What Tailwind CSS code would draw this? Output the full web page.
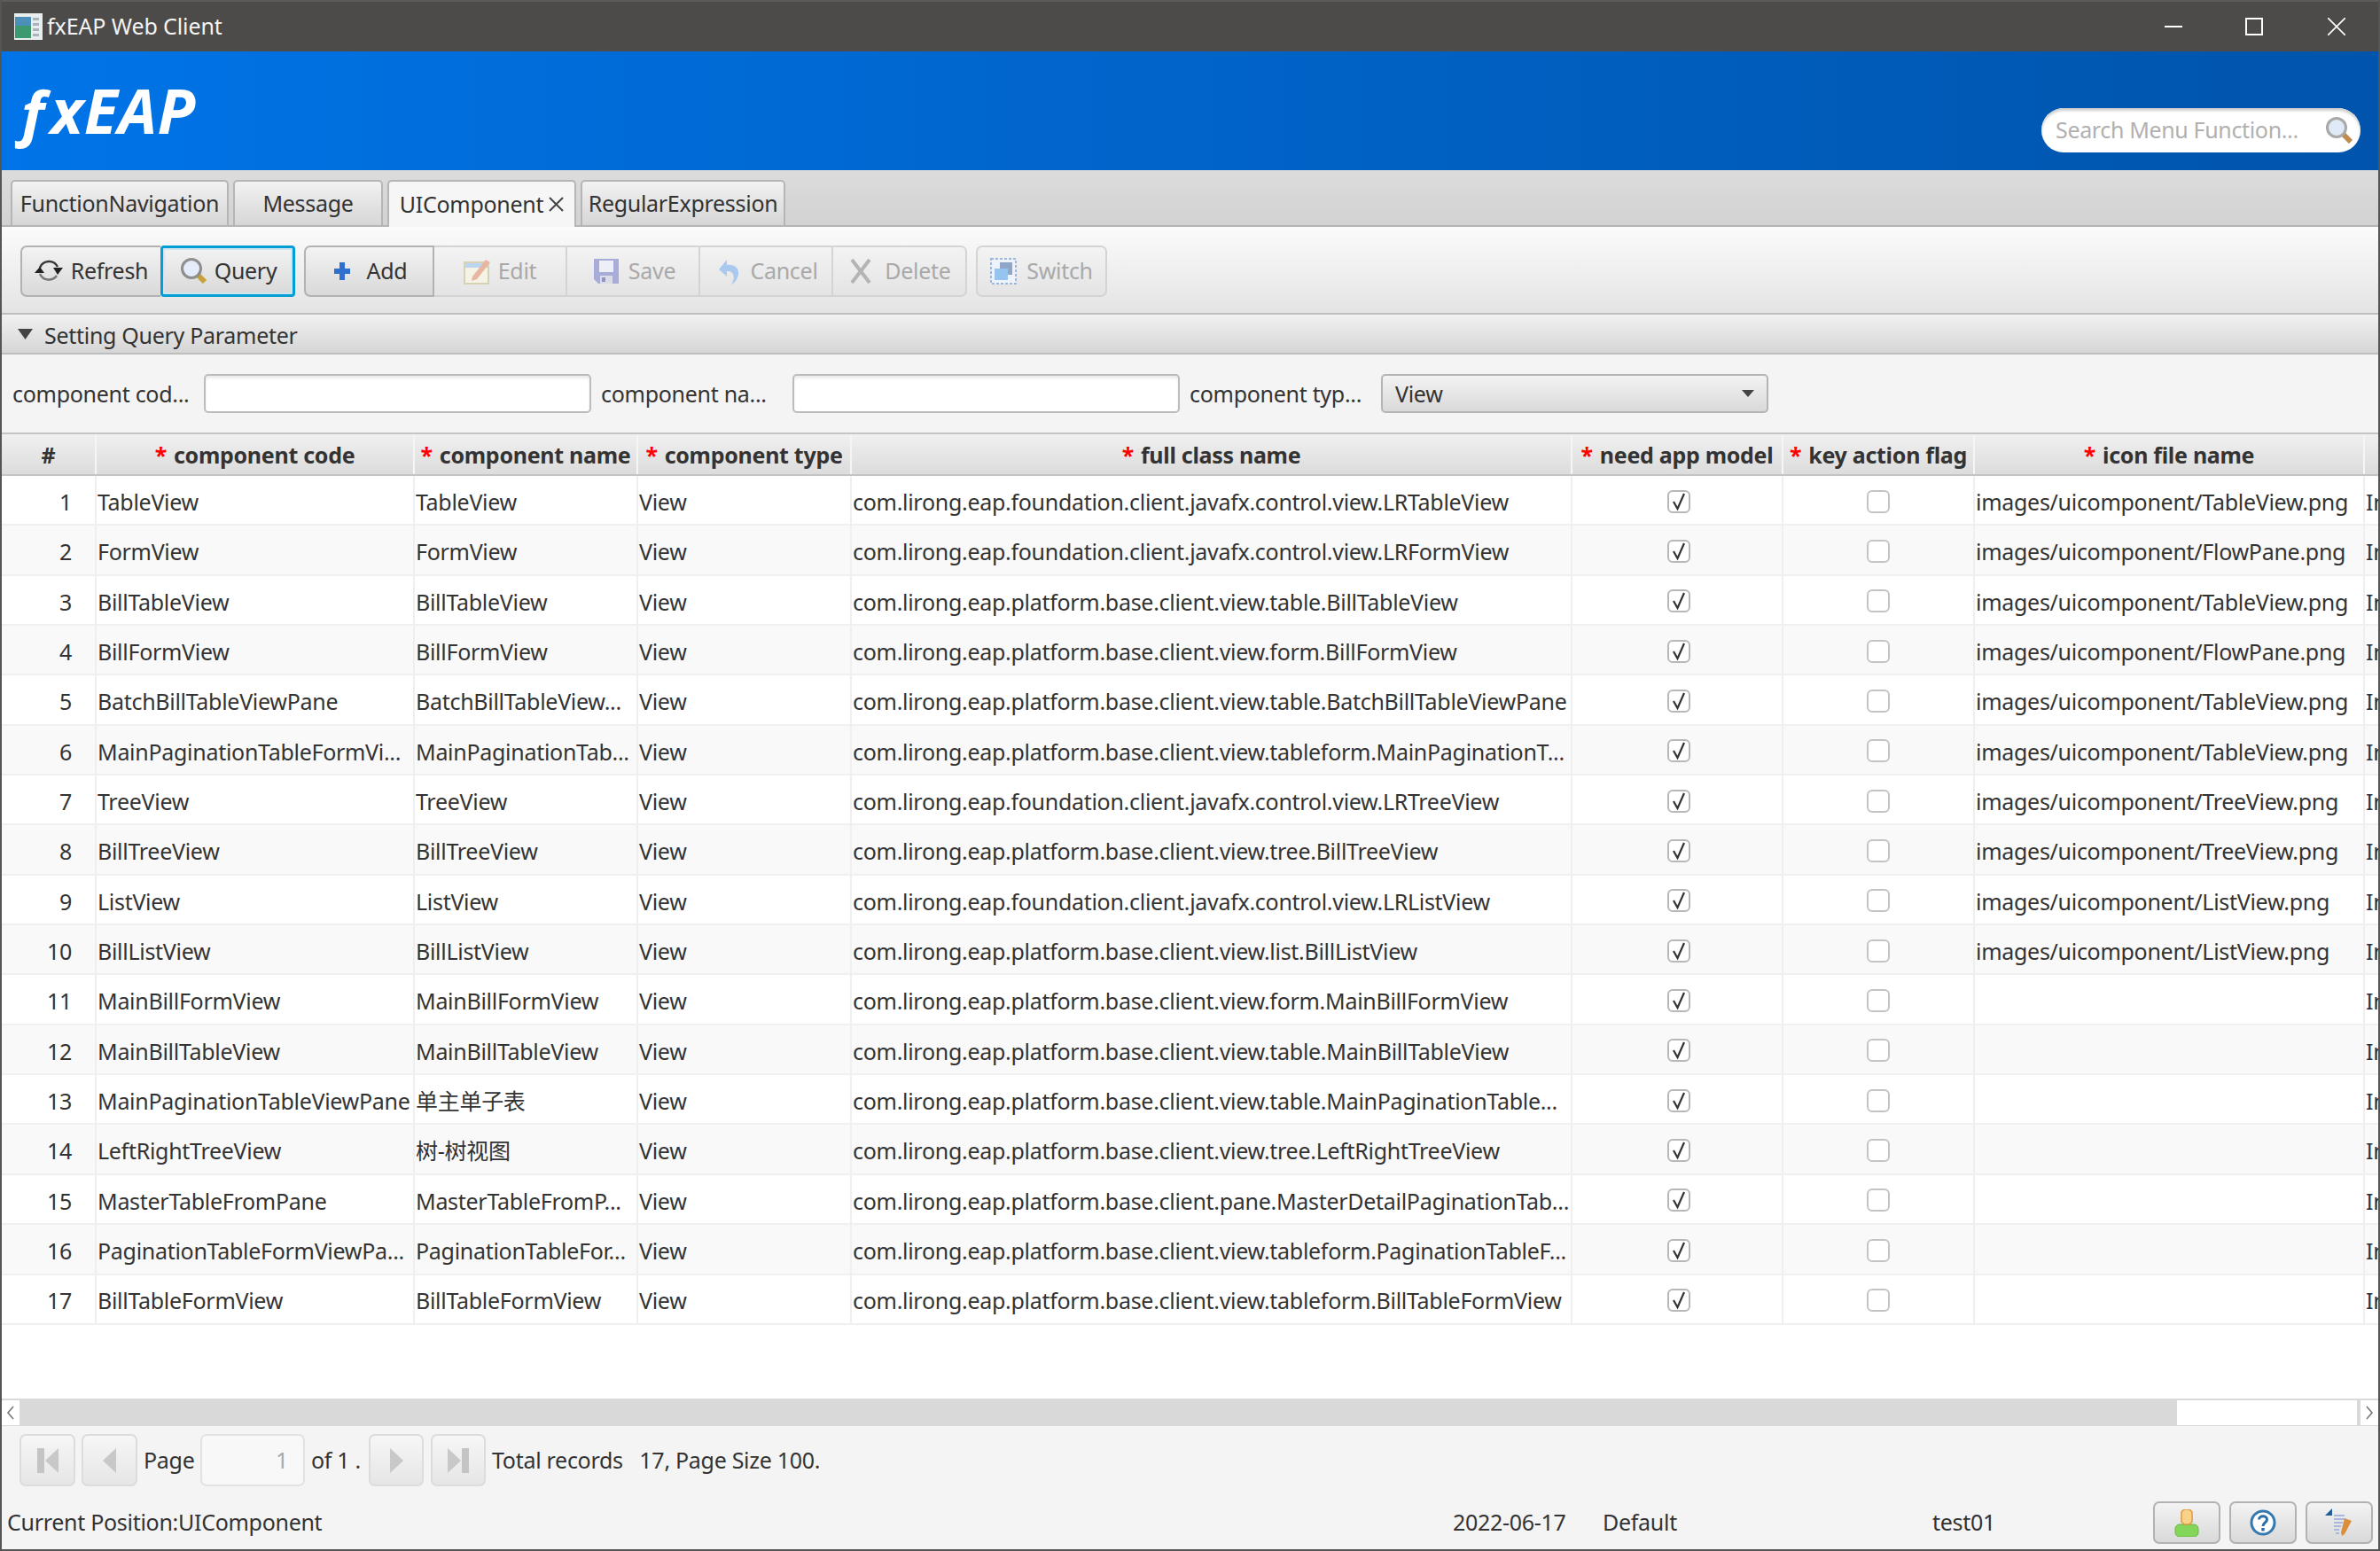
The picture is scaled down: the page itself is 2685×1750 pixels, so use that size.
<!DOCTYPE html>
<html lang="en">
<head>
  <meta charset="UTF-8">
  <title>fxEAP Web Client</title>
  <script src="https://cdn.jsdelivr.net/npm/@tailwindcss/browser@4"></script>
</head>
<body class="bg-[#f4f4f4] overflow-hidden">
<div class="w-[2685px] h-[1750px] flex flex-col border-x-2 border-b-2 border-[#555555] font-['Noto_Sans','Noto_Sans_CJK_SC',sans-serif] text-[25px] tracking-[-0.29px] text-[#333333]">

  <!-- title bar -->
  <div class="h-[58px] shrink-0 bg-[#4d4b49] border-t-2 border-[#5c5c5c] flex items-center text-[#f4f4f4] tracking-[-0.1px] relative">
    <svg class="ml-[14px] w-[32px] h-[30px]" viewBox="0 0 32 30"><rect width="32" height="30" fill="#e8eef0"/><rect x="1" y="4" width="18" height="24" fill="#3d9a6e"/><rect x="1" y="4" width="18" height="10" fill="#4a90b8"/><rect x="21" y="5" width="7" height="3" fill="#a8b4b8"/><rect x="21" y="11" width="7" height="3" fill="#a8b4b8"/><rect x="21" y="17" width="7" height="3" fill="#a8b4b8"/><rect x="21" y="23" width="7" height="3" fill="#a8b4b8"/></svg>
    <span class="ml-[5px]">fxEAP Web Client</span>
    <div class="ml-auto flex items-center">
      <svg class="w-[20px] h-[20px]" viewBox="0 0 20 20"><path d="M0 10H20" stroke="#fff" stroke-width="2"/></svg>
      <svg class="ml-[71px] w-[20px] h-[20px]" viewBox="0 0 20 20"><rect x="1" y="1" width="18" height="18" fill="none" stroke="#fff" stroke-width="2"/></svg>
      <svg class="ml-[73px] mr-[37px] w-[20px] h-[20px]" viewBox="0 0 20 20"><path d="M0 0L20 20M20 0L0 20" stroke="#fff" stroke-width="1.6"/></svg>
    </div>
  </div>

  <!-- banner -->
  <div class="h-[134px] shrink-0 bg-linear-to-r from-[#0074e8] to-[#0054ab] flex items-center">
    <div class="ml-[16px] mt-[-2px] font-['Open_Sans',sans-serif] italic font-bold text-[70px] tracking-[0.5px] text-white leading-none">ƒxEAP</div>
    <div class="ml-auto mr-[20px] mt-[44px] w-[360px] h-[50px] rounded-full bg-white shadow-[inset_0_3px_3px_#cfcfcf] flex items-center pl-[16px] text-[25px] text-[#b0b0b0] tracking-[-0.35px]">
      <span>Search Menu Function...</span>
      <svg class="ml-auto mr-[8px] w-[32px] h-[32px]" viewBox="0 0 32 32"><path d="M20 20L29 29" stroke="#c08a50" stroke-width="6"/><circle cx="13" cy="13" r="10.5" fill="#dfe9f7" stroke="#a9a9a9" stroke-width="3"/></svg>
    </div>
  </div>

  <!-- tabs -->
  <div class="h-[64px] shrink-0 bg-linear-to-b from-[#dcdcdc] to-[#d2d2d2] border-b-2 border-[#b4b4b4] flex items-end pl-[10px] gap-[5px]">
    <div class="w-[246px] h-[53px] mb-[-2px] border-2 border-[#b5b5b5] rounded-t-[5px] bg-linear-to-b from-[#f2f2f2] to-[#d6d6d6] flex items-center justify-center">FunctionNavigation</div>
    <div class="w-[169px] h-[53px] mb-[-2px] border-2 border-[#b5b5b5] rounded-t-[5px] bg-linear-to-b from-[#f2f2f2] to-[#d6d6d6] flex items-center justify-center">Message</div>
    <div class="w-[213px] h-[53px] mb-[-2px] border-2 border-b-0 border-[#b5b5b5] rounded-t-[5px] bg-[#f6f6f6] flex items-center justify-center gap-[6px]">UIComponent
      <svg class="w-[17px] h-[17px]" viewBox="0 0 17 17"><path d="M1 1L16 16M16 1L1 16" stroke="#444" stroke-width="2"/></svg>
    </div>
    <div class="w-[231px] h-[53px] mb-[-2px] border-2 border-[#b5b5b5] rounded-t-[5px] bg-linear-to-b from-[#f2f2f2] to-[#d6d6d6] flex items-center justify-center">RegularExpression</div>
  </div>

  <!-- toolbar -->
  <div class="h-[99px] shrink-0 bg-linear-to-b from-[#fbfbfb] to-[#e4e4e4] border-b-2 border-[#bdbdbd] pl-[21px] pt-[21px] flex items-start">
    <div class="w-[158px] h-[58px] border-2 border-r-0 border-[#b2b2b2] rounded-l-[7px] bg-linear-to-b from-[#f3f3f3] to-[#d9d9d9] flex items-center justify-center gap-[9px]">
      <svg class="w-[32px] h-[28px]" viewBox="0 0 32 28"><path d="M6 10A11 11 0 0 1 26 9" fill="none" stroke="#3a3a3a" stroke-width="2.5"/><path d="M25 19A11 11 0 0 1 6 17" fill="none" stroke="#777" stroke-width="2.5"/><path d="M0 16H11L6 9Z" fill="#222"/><path d="M21 10H32L26 18Z" fill="#222"/></svg>
      <span>Refresh</span>
    </div>
    <div class="w-[152px] h-[58px] pl-[2px] border-[3px] border-[#039ed3] rounded-[4px] shadow-[inset_0_0_0_2px_#cfe6ef] bg-linear-to-b from-[#f3f3f3] to-[#d9d9d9] flex items-center justify-center gap-[8px]">
      <svg class="w-[30px] h-[30px]" viewBox="0 0 30 30"><path d="M19 19L27 27" stroke="#c9a13a" stroke-width="6"/><circle cx="12" cy="12" r="10.5" fill="#e3ecf8" stroke="#8e8e8e" stroke-width="3"/></svg>
      <span>Query</span>
    </div>
    <div class="ml-[10px] w-[147px] h-[58px] pl-[2px] border-2 border-[#b2b2b2] rounded-l-[7px] bg-linear-to-b from-[#f3f3f3] to-[#d9d9d9] flex items-center justify-center gap-[18px]">
      <svg class="w-[20px] h-[32px]" viewBox="0 0 20 32"><path d="M7 6H13V13H19V19H13V26H7V19H1V13H7Z" fill="#2f6fd0"/></svg>
      <span>Add</span>
    </div>
    <div class="w-[150px] h-[58px] border-2 border-l-0 border-[#d4d4d4] bg-linear-to-b from-[#f3f3f3] to-[#e4e4e4] flex items-center justify-center gap-[9px] text-[#a9a9a9]">
      <svg class="w-[30px] h-[30px]" viewBox="0 0 30 30"><rect x="1" y="5" width="27" height="24" fill="#f5f3e6" stroke="#d8d2b4" stroke-width="2"/><rect x="2" y="6" width="25" height="5" fill="#bcd6ef"/><path d="M10 21L25 2L30 5L15 24L9 26Z" fill="#e8b6a0"/></svg>
      <span>Edit</span>
    </div>
    <div class="w-[150px] h-[58px] pl-[4px] border-2 border-l-0 border-[#d4d4d4] bg-linear-to-b from-[#f3f3f3] to-[#e4e4e4] flex items-center justify-center gap-[11px] text-[#a9a9a9]">
      <svg class="w-[28px] h-[28px]" viewBox="0 0 28 28"><path d="M0 0H28V28H5L0 23Z" fill="#a8acd8"/><rect x="6" y="2" width="16" height="13" fill="#eeeef6"/><rect x="7" y="19" width="14" height="9" fill="#dcdce6"/><rect x="9" y="21" width="4" height="5" fill="#8f93bd"/></svg>
      <span>Save</span>
    </div>
    <div class="w-[150px] h-[58px] pl-[4px] border-2 border-l-0 border-[#d4d4d4] bg-linear-to-b from-[#f3f3f3] to-[#e4e4e4] flex items-center justify-center gap-[11px] text-[#a9a9a9]">
      <svg class="w-[26px] h-[30px]" viewBox="0 0 26 30"><path d="M2 13L11 2V8C20 7 25 12 24 19C23 24 20 28 16 30C19 25 20 20 17 17C15 15 13 15 11 15V21Z" fill="#a9c9ee"/></svg>
      <span>Cancel</span>
    </div>
    <div class="w-[151px] h-[58px] pl-[2px] border-2 border-l-0 border-[#d4d4d4] rounded-r-[7px] bg-linear-to-b from-[#f3f3f3] to-[#e4e4e4] flex items-center justify-center gap-[14px] text-[#a9a9a9]">
      <svg class="w-[26px] h-[30px]" viewBox="0 0 26 30"><path d="M3 2L23 28M23 2L3 28" stroke="#b4b4b4" stroke-width="4"/></svg>
      <span>Delete</span>
    </div>
    <div class="ml-[10px] w-[148px] h-[58px] border-2 border-[#d4d4d4] rounded-[7px] bg-linear-to-b from-[#f3f3f3] to-[#e4e4e4] flex items-center justify-center gap-[11px] text-[#a9a9a9]">
      <svg class="w-[30px] h-[30px]" viewBox="0 0 30 30"><rect x="1" y="1" width="28" height="28" fill="#eef2f9" stroke="#9db8e0" stroke-width="2" stroke-dasharray="3 2"/><rect x="11" y="5" width="14" height="14" fill="#8fa6c8"/><rect x="5" y="12" width="15" height="13" fill="#97c4ee"/></svg>
      <span>Switch</span>
    </div>
  </div>

  <!-- query pane header -->
  <div class="h-[44px] shrink-0 mt-[1px] bg-linear-to-b from-[#f0f0f0] to-[#d6d6d6] border-b-2 border-[#bdbdbd] flex items-center pl-[18px] gap-[13px]">
    <svg class="w-[17px] h-[12px]" viewBox="0 0 17 12"><path d="M0 0H17L8.5 12Z" fill="#444"/></svg>
    <span class="pt-[3px]">Setting Query Parameter</span>
  </div>

  <!-- query form -->
  <div class="h-[88px] shrink-0 flex items-start pt-[22px]">
    <div class="w-[228px] pl-[12px] pt-[2px] h-[44px] flex items-center">component cod...</div>
    <div class="w-[437px] h-[44px] border-2 border-[#bcbcbc] rounded-[5px] bg-white shadow-[inset_0_3px_3px_#ececec]"></div>
    <div class="w-[227px] pl-[11px] pt-[2px] h-[44px] flex items-center">component na...</div>
    <div class="w-[437px] h-[44px] border-2 border-[#bcbcbc] rounded-[5px] bg-white shadow-[inset_0_3px_3px_#ececec]"></div>
    <div class="w-[227px] pl-[11px] pt-[2px] h-[44px] flex items-center">component typ...</div>
    <div class="w-[437px] h-[44px] border-2 border-[#b5b5b5] rounded-[5px] bg-linear-to-b from-[#f3f3f3] to-[#d9d9d9] flex items-center pl-[14px] pr-[14px] justify-between">
      <span class="pt-[2px]">View</span>
      <svg class="w-[14px] h-[8px]" viewBox="0 0 14 8"><path d="M0 0H14L7 8Z" fill="#444"/></svg>
    </div>
  </div>

  <!-- table header -->
  <div class="h-[49px] shrink-0 border-y-2 border-[#c4c4c4] bg-linear-to-b from-[#f0f0f0] to-[#dcdcdc] grid grid-cols-[107px_359px_252px_241px_813px_238px_216px_440px_15px] font-bold text-[#333333]">
    <div class="border-r-2 border-[#f5f5f5] flex items-center justify-center pt-[2px]">#</div>
    <div class="border-r-2 border-[#f5f5f5] flex items-center justify-center gap-[8px] pt-[2px]"><span class="text-[#ff0000]">*</span>component code</div>
    <div class="border-r-2 border-[#f5f5f5] flex items-center justify-center gap-[8px] pt-[2px]"><span class="text-[#ff0000]">*</span>component name</div>
    <div class="border-r-2 border-[#f5f5f5] flex items-center justify-center gap-[8px] pt-[2px]"><span class="text-[#ff0000]">*</span>component type</div>
    <div class="border-r-2 border-[#f5f5f5] flex items-center justify-center gap-[8px] pt-[2px]"><span class="text-[#ff0000]">*</span>full class name</div>
    <div class="border-r-2 border-[#f5f5f5] flex items-center justify-center gap-[8px] pt-[2px]"><span class="text-[#ff0000]">*</span>need app model</div>
    <div class="border-r-2 border-[#f5f5f5] flex items-center justify-center gap-[8px] pt-[2px]"><span class="text-[#ff0000]">*</span>key action flag</div>
    <div class="border-r-2 border-[#f5f5f5] flex items-center justify-center gap-[8px] pt-[2px]"><span class="text-[#ff0000]">*</span>icon file name</div>
    <div></div>
  </div>

  <!-- table body -->
  <div id="rows" class="flex-1 bg-white overflow-hidden"></div>

  <!-- horizontal scrollbar -->
  <div class="h-[31px] shrink-0 bg-[#d9d9d9] flex items-center">
    <div class="w-[20px] h-[28px] bg-white flex items-center justify-center">
      <svg class="w-[10px] h-[16px]" viewBox="0 0 10 16"><path d="M8 1L2 8L8 15" fill="none" stroke="#777" stroke-width="1.6"/></svg>
    </div>
    <div class="ml-auto w-[203px] h-[28px] bg-white"></div>
    <div class="ml-[4px] w-[20px] h-[28px] bg-white flex items-center justify-center">
      <svg class="w-[10px] h-[16px]" viewBox="0 0 10 16"><path d="M2 1L8 8L2 15" fill="none" stroke="#777" stroke-width="1.6"/></svg>
    </div>
  </div>

  <!-- pagination -->
  <div class="h-[81px] shrink-0 pt-[9px] pl-[20px] flex items-start">
    <div class="w-[63px] h-[59px] border-2 border-[#dcdcdc] rounded-[7px] bg-linear-to-b from-[#f6f6f6] to-[#e6e6e6] flex items-center justify-center">
      <svg class="w-[26px] h-[30px]" viewBox="0 0 26 30"><rect x="1" y="1" width="8" height="28" fill="#c4c4c4"/><path d="M25 1V29L10 15Z" fill="#c8c8c8"/></svg>
    </div>
    <div class="ml-[7px] w-[63px] h-[59px] border-2 border-[#dcdcdc] rounded-[7px] bg-linear-to-b from-[#f6f6f6] to-[#e6e6e6] flex items-center justify-center">
      <svg class="w-[17px] h-[30px]" viewBox="0 0 17 30"><path d="M16 1V29L1 15Z" fill="#c8c8c8"/></svg>
    </div>
    <div class="w-[71px] pl-[7px] h-[59px] flex items-center">Page</div>
    <div class="w-[118px] h-[59px] border-2 border-[#e2e2e2] rounded-[7px] bg-[#f8f8f8] flex items-center justify-end pr-[17px] text-[#a8a8a8]">1</div>
    <div class="w-[72px] pl-[7px] h-[59px] flex items-center whitespace-nowrap">of 1 .</div>
    <div class="w-[62px] h-[59px] border-2 border-[#dcdcdc] rounded-[7px] bg-linear-to-b from-[#f6f6f6] to-[#e6e6e6] flex items-center justify-center">
      <svg class="w-[17px] h-[30px]" viewBox="0 0 17 30"><path d="M1 1V29L16 15Z" fill="#c8c8c8"/></svg>
    </div>
    <div class="ml-[8px] w-[62px] h-[59px] border-2 border-[#dcdcdc] rounded-[7px] bg-linear-to-b from-[#f6f6f6] to-[#e6e6e6] flex items-center justify-center">
      <svg class="w-[26px] h-[30px]" viewBox="0 0 26 30"><path d="M1 1V29L16 15Z" fill="#c8c8c8"/><rect x="17" y="1" width="8" height="28" fill="#c4c4c4"/></svg>
    </div>
    <div class="ml-[7px] h-[59px] flex items-center whitespace-pre">Total records   17, Page Size 100.</div>
  </div>

  <!-- status bar -->
  <div class="flex-none h-[58px] pb-[6px] flex items-end relative">
    <div class="pl-[6px] w-[1637px] h-[48px] flex items-center">Current Position:UIComponent</div>
    <div class="w-[169px] h-[48px] flex items-center">2022-06-17</div>
    <div class="w-[372px] h-[48px] flex items-center">Default</div>
    <div class="w-[249px] h-[48px] flex items-center">test01</div>
    <div class="w-[76px] h-[48px] border-2 border-[#b2b2b2] rounded-[7px] bg-linear-to-b from-[#f3f3f3] to-[#d9d9d9] flex items-center justify-center">
      <svg class="w-[28px] h-[31px]" viewBox="0 0 28 31"><rect x="1" y="17" width="26" height="14" rx="5" fill="#84d65a" stroke="#66b83f"/><path d="M8 3L11 0H17L20 3V14L17 17H11L8 14Z" fill="#fbd28a" stroke="#dd9b3e" stroke-width="1.5"/></svg>
    </div>
    <div class="ml-[10px] w-[76px] h-[48px] border-2 border-[#b2b2b2] rounded-[7px] bg-linear-to-b from-[#f3f3f3] to-[#d9d9d9] flex items-center justify-center">
      <svg class="w-[30px] h-[30px]" viewBox="0 0 30 30"><circle cx="15" cy="15" r="13" fill="#fff" stroke="#3478b0" stroke-width="3"/><path d="M10.5 11.5C10.5 6.5 19.5 6.5 19.5 11.5C19.5 15 15 15 15 19" fill="none" stroke="#2a6ea8" stroke-width="3"/><rect x="13.3" y="21" width="3.4" height="3.4" fill="#2a6ea8"/></svg>
    </div>
    <div class="ml-[10px] w-[76px] h-[48px] border-2 border-[#b2b2b2] rounded-[7px] bg-linear-to-b from-[#f3f3f3] to-[#d9d9d9] flex items-center justify-center">
      <svg class="w-[32px] h-[32px]" viewBox="0 0 32 32"><path d="M0 8L8 0V8Z" fill="#1f5f9e"/><path d="M10 8H22M10 12H22M10 16H20M10 20H18M10 24H16M12 28H16" stroke="#aab6dc" stroke-width="2"/><path d="M22 11L30 14L22 29L19 31L18 27Z" fill="#d98f3c"/></svg>
    </div>
  </div>
</div>

<script>
  // one entry per record: code, name, full class name, icon file
  const data = [
    ['TableView', 'TableView', 'com.lirong.eap.foundation.client.javafx.control.view.LRTableView', 'images/uicomponent/TableView.png'],
    ['FormView', 'FormView', 'com.lirong.eap.foundation.client.javafx.control.view.LRFormView', 'images/uicomponent/FlowPane.png'],
    ['BillTableView', 'BillTableView', 'com.lirong.eap.platform.base.client.view.table.BillTableView', 'images/uicomponent/TableView.png'],
    ['BillFormView', 'BillFormView', 'com.lirong.eap.platform.base.client.view.form.BillFormView', 'images/uicomponent/FlowPane.png'],
    ['BatchBillTableViewPane', 'BatchBillTableView...', 'com.lirong.eap.platform.base.client.view.table.BatchBillTableViewPane', 'images/uicomponent/TableView.png'],
    ['MainPaginationTableFormVi...', 'MainPaginationTab...', 'com.lirong.eap.platform.base.client.view.tableform.MainPaginationT...', 'images/uicomponent/TableView.png'],
    ['TreeView', 'TreeView', 'com.lirong.eap.foundation.client.javafx.control.view.LRTreeView', 'images/uicomponent/TreeView.png'],
    ['BillTreeView', 'BillTreeView', 'com.lirong.eap.platform.base.client.view.tree.BillTreeView', 'images/uicomponent/TreeView.png'],
    ['ListView', 'ListView', 'com.lirong.eap.foundation.client.javafx.control.view.LRListView', 'images/uicomponent/ListView.png'],
    ['BillListView', 'BillListView', 'com.lirong.eap.platform.base.client.view.list.BillListView', 'images/uicomponent/ListView.png'],
    ['MainBillFormView', 'MainBillFormView', 'com.lirong.eap.platform.base.client.view.form.MainBillFormView', ''],
    ['MainBillTableView', 'MainBillTableView', 'com.lirong.eap.platform.base.client.view.table.MainBillTableView', ''],
    ['MainPaginationTableViewPane', '单主单子表', 'com.lirong.eap.platform.base.client.view.table.MainPaginationTable...', ''],
    ['LeftRightTreeView', '树-树视图', 'com.lirong.eap.platform.base.client.view.tree.LeftRightTreeView', ''],
    ['MasterTableFromPane', 'MasterTableFromP...', 'com.lirong.eap.platform.base.client.pane.MasterDetailPaginationTab...', ''],
    ['PaginationTableFormViewPa...', 'PaginationTableFor...', 'com.lirong.eap.platform.base.client.view.tableform.PaginationTableF...', ''],
    ['BillTableFormView', 'BillTableFormView', 'com.lirong.eap.platform.base.client.view.tableform.BillTableFormView', '']
  ];

  const cell = 'border-r-2 border-[#efefef] flex items-center pl-[1px] pt-[5px] overflow-hidden whitespace-nowrap';
  const check = '<svg class="w-[26px] h-[26px]" viewBox="0 0 26 26"><rect x="1" y="1" width="24" height="24" rx="5" fill="#fff" stroke="#b8b8b8" stroke-width="2"/><path d="M7 13L11.5 21L19 4" fill="none" stroke="#333" stroke-width="2.2"/></svg>';
  const empty = '<svg class="w-[26px] h-[26px]" viewBox="0 0 26 26"><rect x="1" y="1" width="24" height="24" rx="5" fill="#fff" stroke="#c4c4c4" stroke-width="2"/></svg>';

  document.getElementById('rows').innerHTML = data.map((r, i) => `
    <div class="h-[56.35px] border-b-2 border-[#f0f0f0] grid grid-cols-[107px_359px_252px_241px_813px_238px_216px_440px_15px] ${i % 2 ? 'bg-[#f9f9f9]' : 'bg-white'}">
      <div class="border-r-2 border-[#efefef] flex items-center justify-end pr-[26px] pt-[5px]">${i + 1}</div>
      <div class="${cell}">${r[0]}</div>
      <div class="${cell}">${r[1]}</div>
      <div class="${cell}">View</div>
      <div class="${cell}">${r[2]}</div>
      <div class="border-r-2 border-[#efefef] flex items-center justify-center pl-[3px] pt-[3px]">${check}</div>
      <div class="border-r-2 border-[#efefef] flex items-center justify-center pt-[3px]">${empty}</div>
      <div class="${cell}">${r[3]}</div>
      <div class="flex items-center pl-[1px] pt-[5px] overflow-hidden whitespace-nowrap">In</div>
    </div>`).join('');
</script>
</body>
</html>
